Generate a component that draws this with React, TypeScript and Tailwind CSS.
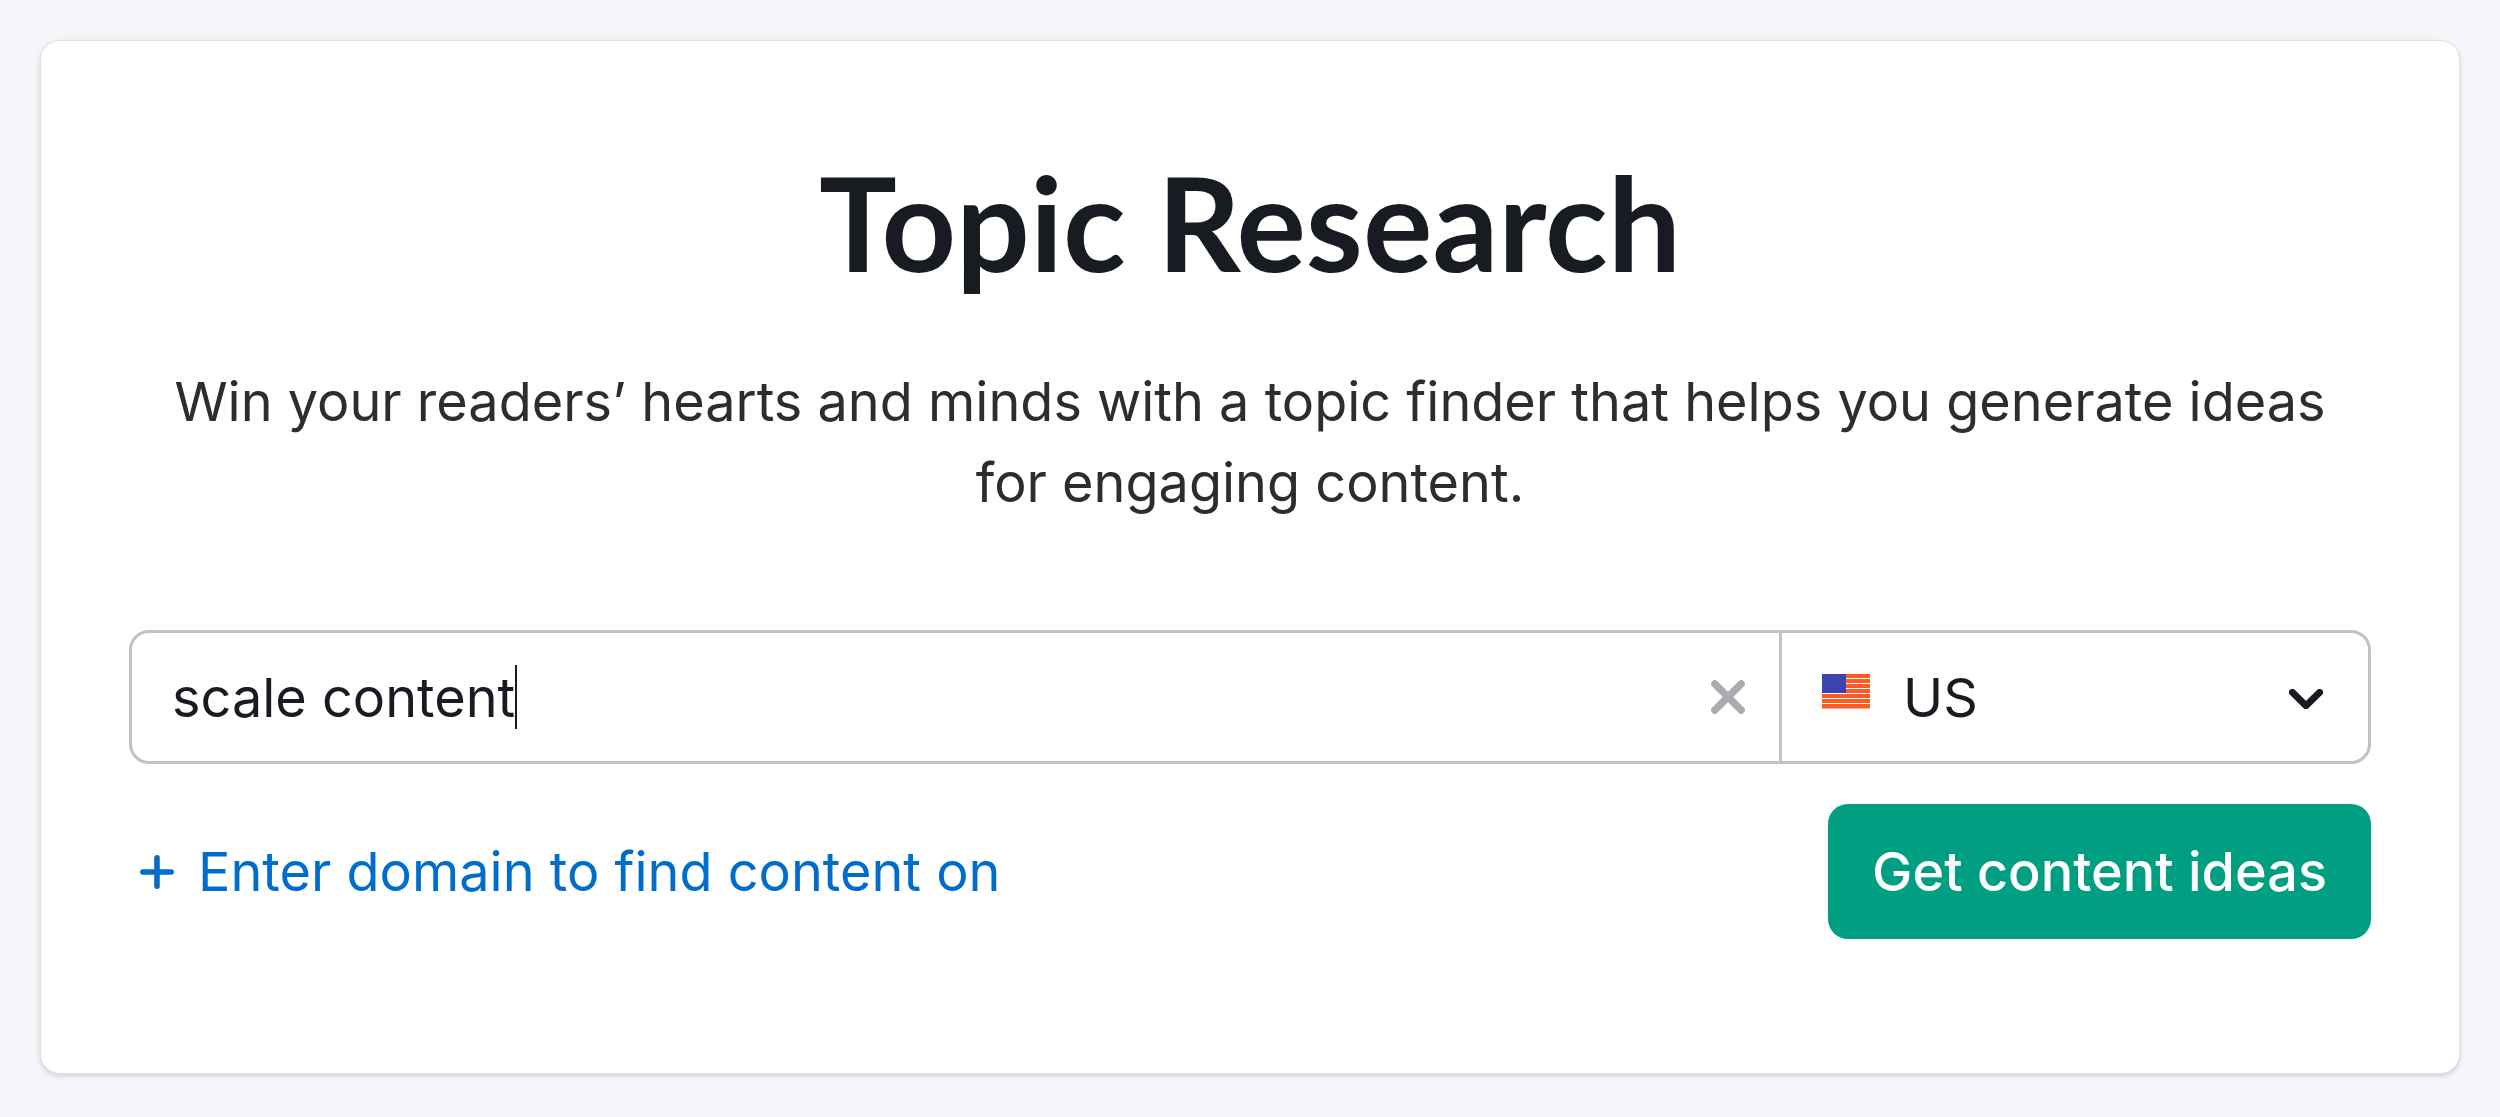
import { useState } from "react";

function FlagUS() {
  return (
    <svg viewBox="0 0 48 35" className="w-12 h-[35px]" aria-hidden="true">
      <rect width="48" height="35" fill="#fff" />
      {[0, 5, 10, 15, 20, 25, 30].map((y) => (
        <rect key={y} y={y} width="48" height="4" fill="#ff5a26" />
      ))}
      <rect y="34" width="48" height="1" fill="#ff5a26" opacity="0.5" />
      <rect width="24" height="19" fill="#3c44b1" />
    </svg>
  );
}

function ChevronDown() {
  return (
    <svg viewBox="0 0 34 20" className="w-[34px] h-5" aria-hidden="true">
      <path
        d="M3.3 3.3 17 16.7 30.7 3.3"
        fill="none"
        stroke="#191b23"
        strokeWidth="6.8"
        strokeLinecap="round"
        strokeLinejoin="round"
      />
    </svg>
  );
}

function Cross() {
  return (
    <svg viewBox="0 0 34 34" className="size-[34px]" aria-hidden="true">
      <path
        d="M3.8 3.8 30.2 30.2M30.2 3.8 3.8 30.2"
        fill="none"
        stroke="#a9abb0"
        strokeWidth="7.4"
        strokeLinecap="round"
      />
    </svg>
  );
}

function Plus() {
  return (
    <svg viewBox="0 0 34 34" className="size-[34px]" aria-hidden="true">
      <path
        d="M17 2.8V31.2M2.8 17H31.2"
        fill="none"
        stroke="#006dca"
        strokeWidth="5.5"
        strokeLinecap="round"
      />
    </svg>
  );
}

export default function App() {
  const [topic, setTopic] = useState("scale content");
  const [country, setCountry] = useState("US");

  return (
    <div className="min-h-screen bg-[#f4f5f9] p-10 font-['Inter',sans-serif]">
      <main className="rounded-[20px] border border-[#e0e3e7] bg-white px-[88px] pt-[101px] pb-[134px] shadow-[0_2px_4px_rgba(25,27,35,0.16)]">
        <h1 className="text-center font-['Lato',sans-serif] text-[130px] leading-[160px] font-bold text-[#191b23]">
          Topic Research
        </h1>
        <p className="mt-[59px] px-10 text-center text-[54px] leading-[81px] text-[#2b2d30]">
          Win your readers’ hearts and minds with a topic finder that helps you
          generate ideas for engaging content.
        </p>

        <form onSubmit={(e) => e.preventDefault()} className="mt-[107px]">
          <div className="flex h-[134px] rounded-[20px] border-[3px] border-[#bdc3c7] text-[54px] text-[#191b23]">
            <div className="flex flex-1 items-center pr-[34px] pl-10">
              <input
                type="text"
                aria-label="Topic"
                value={topic}
                onChange={(e) => setTopic(e.target.value)}
                className="[field-sizing:content] caret-transparent outline-none"
              />
              <span className="h-16 w-0.5 bg-[#191b23]" />
              <button
                type="button"
                aria-label="Clear"
                onClick={() => setTopic("")}
                className="ml-auto"
              >
                <Cross />
              </button>
            </div>
            <div className="relative w-[589px] border-l-[3px] border-[#bdc3c7]">
              <select
                aria-label="Country"
                value={country}
                onChange={(e) => setCountry(e.target.value)}
                className="size-full appearance-none pl-[121px] outline-none"
              >
                <option>US</option>
              </select>
              <div className="pointer-events-none absolute inset-y-0 left-10 flex items-center pb-3">
                <FlagUS />
              </div>
              <div className="pointer-events-none absolute inset-y-0 right-[45px] flex items-center pt-1">
                <ChevronDown />
              </div>
            </div>
          </div>

          <div className="mt-10 flex items-center justify-between text-[54px]">
            <a href="#domain" className="flex items-center gap-6 pl-[11px] text-[#006dca]">
              <Plus />
              Enter domain to find content on
            </a>
            <button
              type="submit"
              className="h-[135px] rounded-[20px] bg-[#009f81] px-11 font-medium text-white"
            >
              Get content ideas
            </button>
          </div>
        </form>
      </main>
    </div>
  );
}
